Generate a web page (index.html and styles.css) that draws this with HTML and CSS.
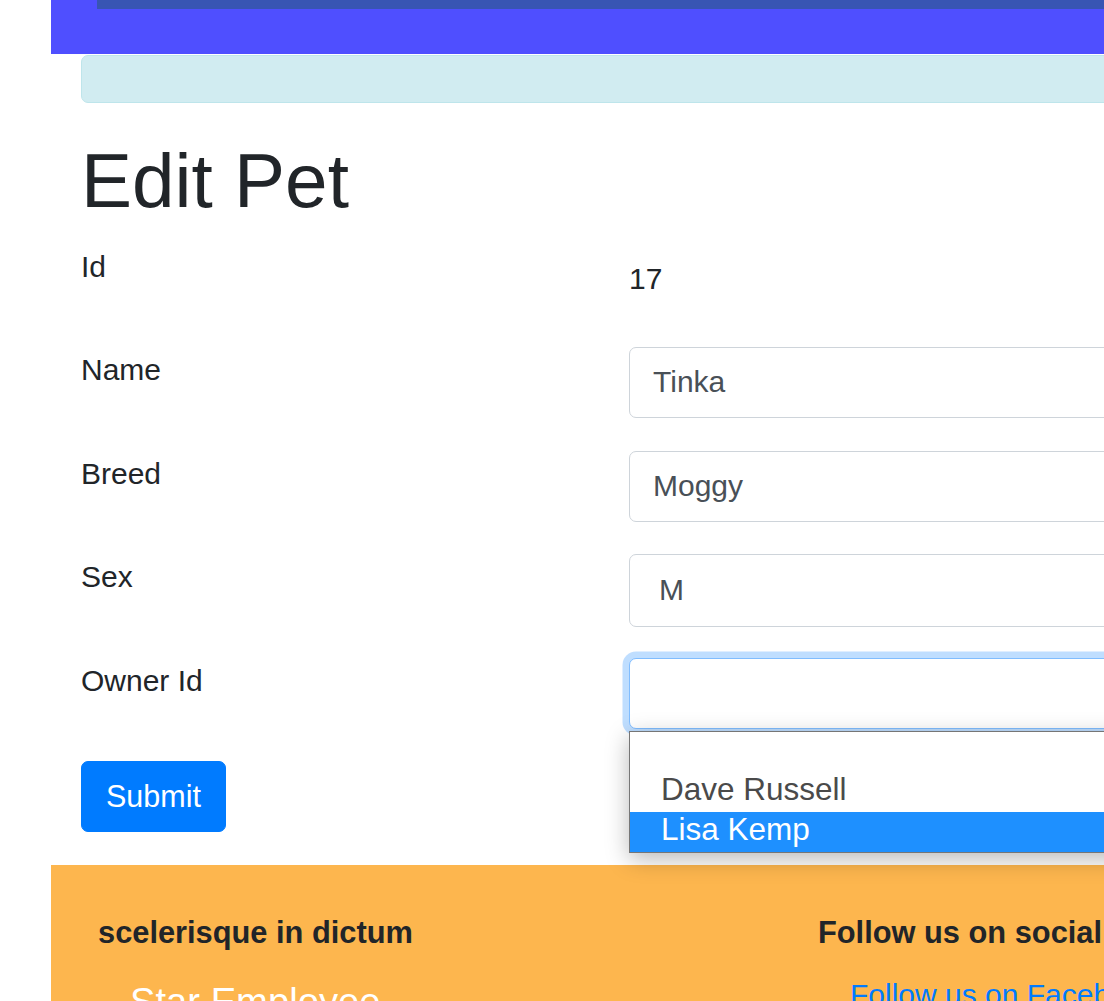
FILE: index.html
```html
<!DOCTYPE html>
<html lang="en">
<head>
<meta charset="utf-8">
<title>Edit Pet</title>
<link rel="stylesheet" href="styles.css">
</head>
<body>
<div class="page">
  <nav class="navbar"><div class="navbar-band"></div></nav>
  <main class="content">
    <div class="alert"></div>
    <h1 class="title">Edit Pet</h1>
    <form class="form">
      <div class="row row-id">
        <label class="label">Id</label>
        <div class="value">17</div>
      </div>
      <div class="row">
        <label class="label">Name</label>
        <div class="field"><div class="control">Tinka</div></div>
      </div>
      <div class="row">
        <label class="label">Breed</label>
        <div class="field"><div class="control">Moggy</div></div>
      </div>
      <div class="row">
        <label class="label">Sex</label>
        <div class="field"><div class="control control-select control-tall">M</div></div>
      </div>
      <div class="row">
        <label class="label">Owner Id</label>
        <div class="field">
          <div class="control control-select control-focus"></div>
          <ul class="dropdown">
            <li class="option"></li>
            <li class="option">Dave Russell</li>
            <li class="option option-active">Lisa Kemp</li>
          </ul>
        </div>
      </div>
      <button type="button" class="btn">Submit</button>
    </form>
  </main>
  <footer class="footer">
    <div class="footer-col footer-col-left">
      <h6 class="footer-heading">scelerisque in dictum</h6>
      <ul class="footer-list">
        <li class="footer-item-white">Star Employee</li>
      </ul>
    </div>
    <div class="footer-col">
      <h6 class="footer-heading">Follow us on social</h6>
      <ul class="footer-list">
        <li><a class="footer-link" href="#">Follow us on Facebook</a></li>
      </ul>
    </div>
  </footer>
</div>
</body>
</html>
```

FILE: styles.css
```css
html, body {
  margin: 0;
  padding: 0;
  overflow: hidden;
  background: #ffffff;
}

body {
  font-family: "Liberation Sans", Arial, sans-serif;
  font-size: 30px;
  line-height: 1.5;
  color: #212529;
}

.page {
  width: 2000px;
}

.navbar {
  margin-left: 51px;
  height: 54px;
  background: #4f4fff;
}

.navbar-band {
  margin-left: 46px;
  height: 9px;
  background: #3855b3;
}

.content {
  margin-left: 51px;
  padding-left: 30px;
  padding-top: 1px;
  padding-bottom: 33px;
}

.alert {
  height: 46px;
  background: #d1ecf1;
  border: 1px solid #bee5eb;
  border-radius: 7px;
}

.title {
  margin: 33px 0 17px;
  font-size: 76.5px;
  font-weight: 400;
  line-height: 90px;
  color: #212529;
}

.form {
  margin: 0;
}

.row {
  display: grid;
  grid-template-columns: 548px 1fr;
  height: 71px;
  margin-bottom: 32.5px;
}

.row-id {
  height: 72px;
  margin-bottom: 32px;
}

.label {
  display: block;
  line-height: 45px;
}

.row-id .label {
  padding-top: 1px;
}

.value {
  padding-top: 13px;
  line-height: 45px;
  color: #212529;
}

.field {
  position: relative;
}

.control {
  box-sizing: border-box;
  height: 71px;
  border: 1px solid #ced4da;
  border-radius: 7px;
  padding: 0 23px;
  line-height: 68px;
  color: #495057;
  background: #ffffff;
}

.control-select {
  padding-left: 29px;
}

.control-tall {
  height: 73px;
  line-height: 70px;
}

.control-focus {
  border-color: #80bdff;
  box-shadow: 0 0 0 6.5px rgba(0, 123, 255, 0.25);
}

.dropdown {
  position: absolute;
  left: 0;
  top: 73px;
  right: 0;
  margin: 0;
  padding: 0;
  list-style: none;
  background: #ffffff;
  border: 1px solid #767676;
  box-shadow: 0 6px 22px rgba(0, 0, 0, 0.28);
  z-index: 5;
}

.option {
  height: 40px;
  line-height: 35px;
  padding-left: 31px;
  font-size: 31.5px;
  color: #4a4a4a;
  white-space: nowrap;
}

.option-active {
  background: #1e90ff;
  color: #ffffff;
}

.btn {
  display: block;
  box-sizing: border-box;
  height: 71px;
  width: 145px;
  padding: 0 24px;
  font-family: "Liberation Sans", Arial, sans-serif;
  font-size: 30.5px;
  line-height: 69px;
  color: #ffffff;
  background: #007bff;
  border: 1px solid #007bff;
  border-radius: 7px;
  text-align: left;
}

.footer {
  display: flex;
  margin-left: 51px;
  padding: 50px 0 0 47px;
  height: 300px;
  background: #fdb64e;
}

.footer-col {
  flex: 0 0 auto;
}

.footer-col-left {
  width: 720px;
}

.footer-heading {
  margin: 0;
  font-size: 30.8px;
  font-weight: 700;
  line-height: 36.6px;
  color: #212529;
}

.footer-list {
  margin: 20px 0 0;
  padding: 0 0 0 32px;
  list-style: none;
}

.footer-item-white {
  font-size: 38.2px;
  line-height: 60px;
  color: #ffffff;
}

.footer-link {
  display: block;
  margin-top: 5px;
  color: #007bff;
  text-decoration: none;
  line-height: 45px;
}
```
